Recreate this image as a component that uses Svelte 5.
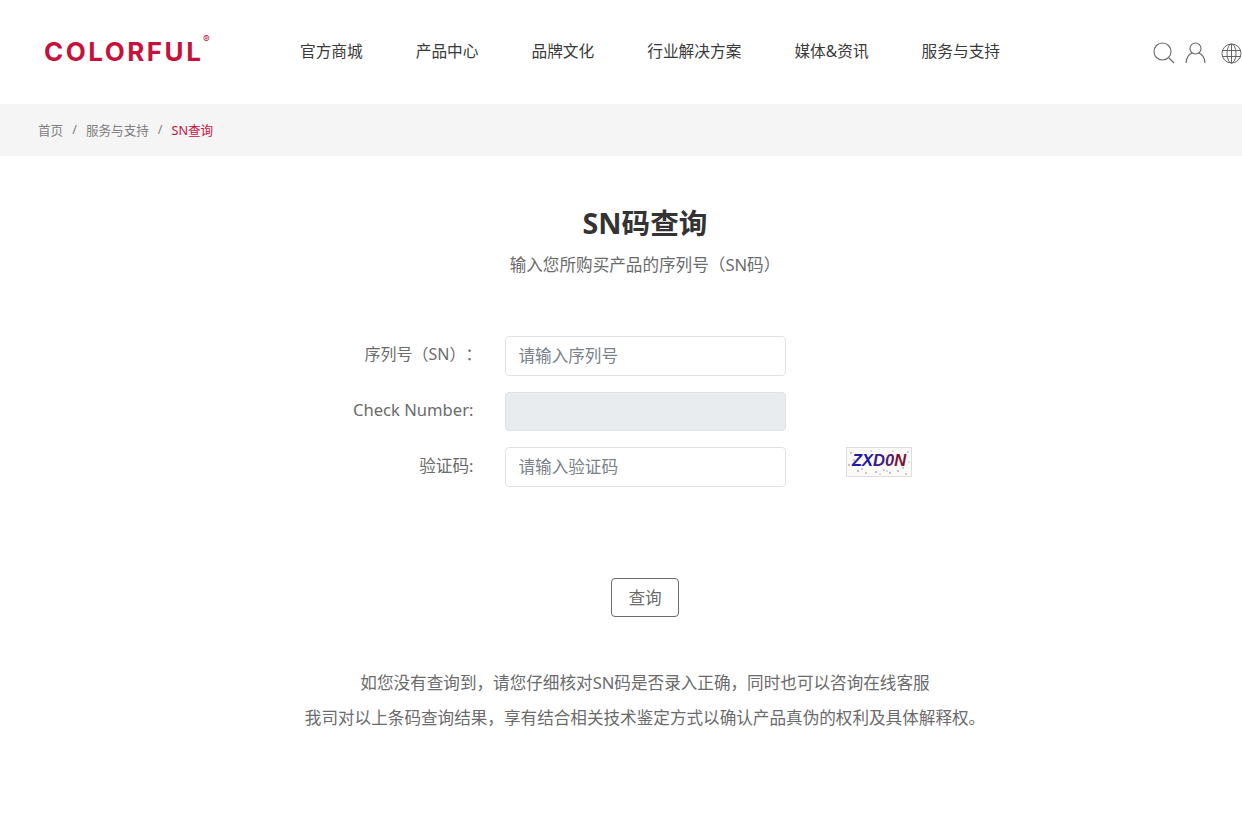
<script>
	const nav = ['官方商城', '产品中心', '品牌文化', '行业解决方案', '媒体&资讯', '服务与支持']
</script>

<div class="page">
	<header class="header">
		<div class="logo">COLORFUL<span class="reg">®</span></div>
		<nav class="nav">
			{#each nav as item}
				<span>{item}</span>
			{/each}
		</nav>
		<div class="tools">
			<svg width="22" height="22" viewBox="0 0 22 22" fill="none" stroke="#666" stroke-width="1.1">
				<circle cx="9.5" cy="9.5" r="8.5" />
				<path d="M16 16l5 5" />
			</svg>
			<svg width="21" height="22" viewBox="0 0 21 22" fill="none" stroke="#666" stroke-width="1.1">
				<circle cx="10.5" cy="6.5" r="5.5" />
				<path d="M1 21c0-6 4-9.5 6.5-10M20 21c0-6-4-9.5-6.5-10" />
			</svg>
			<svg width="21" height="21" viewBox="0 0 21 21" fill="none" stroke="#666" stroke-width="1">
				<circle cx="10.5" cy="10.5" r="9.5" />
				<ellipse cx="10.5" cy="10.5" rx="4.5" ry="9.5" />
				<path d="M10.5 1v19M1.6 7.5h17.8M1.6 13.5h17.8" />
			</svg>
		</div>
	</header>

	<div class="crumbs">
		<span>首页</span>
		<span>/</span>
		<span>服务与支持</span>
		<span>/</span>
		<span class="current">SN查询</span>
	</div>

	<main class="main">
		<h1>SN码查询</h1>
		<p class="sub">输入您所购买产品的序列号（SN码）</p>

		<form class="form">
			<label class="sn-label" for="sn">序列号（SN）：</label>
			<input id="sn" placeholder="请输入序列号" />
			<span></span>

			<label class="check-label" for="check">Check Number:</label>
			<input id="check" disabled />
			<span></span>

			<label for="code">验证码:</label>
			<input id="code" placeholder="请输入验证码" />
			<div class="captcha">
				<svg class="noise" width="66" height="30" viewBox="0 0 66 30" fill="#7d6ca8">
					<circle cx="5" cy="6" r=".8" /><circle cx="12" cy="24" r=".8" /><circle cx="20" cy="26" r=".7" />
					<circle cx="30" cy="25" r=".8" /><circle cx="38" cy="23" r=".7" /><circle cx="44" cy="26" r=".8" />
					<circle cx="52" cy="24" r=".8" /><circle cx="60" cy="27" r=".7" /><circle cx="3" cy="18" r=".8" />
					<circle cx="62" cy="5" r=".7" /><circle cx="25" cy="4" r=".6" /><circle cx="47" cy="4" r=".6" />
					<circle cx="8" cy="13" r=".7" /><circle cx="16" cy="22" r=".7" /><circle cx="34" cy="27" r=".6" />
					<circle cx="57" cy="21" r=".7" /><circle cx="63" cy="15" r=".6" /><circle cx="41" cy="24" r=".6" />
				</svg>
				<span class="z">ZX</span><span class="d">D</span><span class="o">0</span><span class="n">N</span>
			</div>
		</form>

		<button class="query" type="button">查询</button>

		<div class="notes">
			<p>如您没有查询到，请您仔细核对SN码是否录入正确，同时也可以咨询在线客服</p>
			<p>我司对以上条码查询结果，享有结合相关技术鉴定方式以确认产品真伪的权利及具体解释权。</p>
		</div>
	</main>
</div>

<style>
	:global(body) {
		margin: 0;
		background: #fff;
		overflow: hidden;
	}

	.page {
		width: 1242px;
		height: 828px;
		overflow: hidden;
		font-family: "Noto Sans", "Noto Sans CJK SC", sans-serif;
		font-size: 16.6px;
		color: #6b6b6b;
		text-spacing-trim: space-all;
	}

	.header {
		height: 104px;
		display: flex;
		align-items: center;
		position: relative;
	}

	.logo {
		margin-left: 44px;
		width: 256px;
		flex-shrink: 0;
		font-family: Inter, sans-serif;
		font-weight: 700;
		font-size: 26px;
		line-height: 20px;
		letter-spacing: 2.5px;
		color: #c6113d;
		margin-top: -1px;
		position: relative;
	}

	.reg {
		position: absolute;
		left: 159px;
		top: -7px;
		font-size: 10px;
		line-height: 9px;
		font-weight: 400;
		letter-spacing: 0;
	}

	.nav {
		display: flex;
		gap: 53px;
		font-size: 15.7px;
		color: #3a3a3a;
		margin-top: -3px;
		white-space: nowrap;
	}

	.tools {
		position: absolute;
		left: 1153px;
		top: 42px;
		display: flex;
		gap: 10px;
		align-items: center;
	}

	.tools svg:last-child {
		margin-left: 5px;
	}

	.crumbs {
		box-sizing: border-box;
		height: 52px;
		background: #f5f5f6;
		display: flex;
		align-items: center;
		padding: 0 0 2px 38px;
		gap: 9px;
		font-size: 12.6px;
		color: #808080;
	}

	.current {
		color: #c6113d;
	}

	.main {
		width: 1290px;
		display: flex;
		flex-direction: column;
		align-items: center;
	}

	h1 {
		margin: 45px 0 0;
		font-size: 28.6px;
		line-height: 44px;
		font-weight: 700;
		color: #333;
	}

	.sub {
		margin: 8px 0 0;
		line-height: 24px;
	}

	.form {
		display: grid;
		grid-template-columns: 140px 281px 126px;
		column-gap: 31px;
		row-gap: 16px;
		margin: 59px 0 0 -11px;
		width: 612px;
	}

	label {
		line-height: 37px;
		white-space: nowrap;
		justify-self: end;
	}

	.sn-label {
		font-size: 16px;
		margin-right: -8px;
	}

	.check-label {
		line-height: 35px;
	}

	input {
		box-sizing: border-box;
		width: 281px;
		height: 39.5px;
		border: 1px solid #dee2e6;
		border-radius: 4px;
		padding: 0 13px;
		font: inherit;
		background: #fff;
	}

	input::placeholder {
		color: #7a828a;
		opacity: 1;
	}

	input:disabled {
		background: #e9ecef;
	}

	.captcha {
		position: relative;
		box-sizing: border-box;
		margin-left: 29px;
		width: 66px;
		height: 30px;
		border: 1px solid #ddd;
		background: #fbfaf6;
		display: flex;
		align-items: center;
		justify-content: center;
		font-family: "Liberation Sans", sans-serif;
		font-weight: 700;
		font-style: italic;
		font-size: 16.5px;
		padding: 0 0 4px 1px;
	}

	.noise {
		position: absolute;
		left: -1px;
		top: -1px;
	}

	.z {
		color: #2418a8;
	}

	.d {
		color: #3a1a8c;
	}

	.o {
		color: #5a1a70;
	}

	.n {
		color: #7a1238;
	}

	.query {
		margin-top: 91px;
		box-sizing: border-box;
		width: 68px;
		height: 39px;
		border: 1px solid #6b6b6b;
		border-radius: 4px;
		background: #fff;
		font: inherit;
		color: #6b6b6b;
		padding: 0;
	}

	.notes {
		margin-top: 48px;
		text-align: center;
		line-height: 35px;
	}

	.notes p {
		margin: 0;
	}
</style>
